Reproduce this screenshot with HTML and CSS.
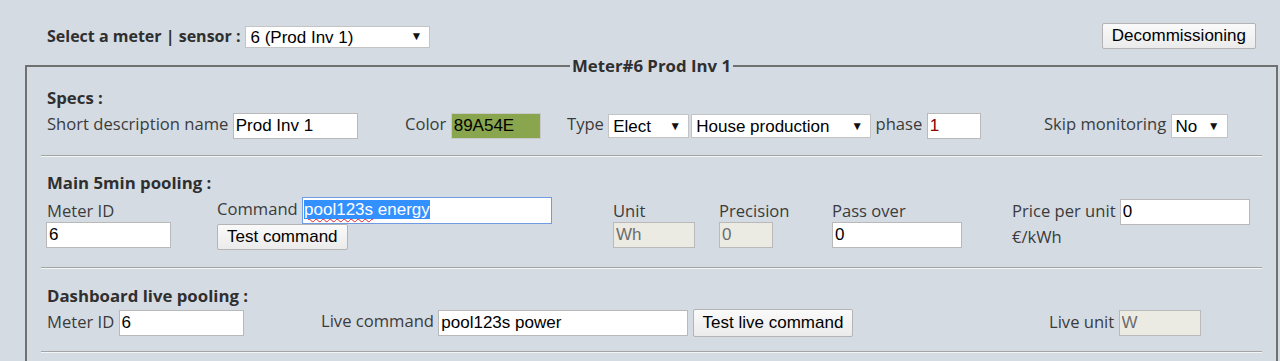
FILE: index.html
```html
<!DOCTYPE html>
<html lang="en">
<head>
    <meta charset="UTF-8">
    <title>Meter settings</title>
    <link rel="stylesheet" href="styles.css">
</head>
<body>
<div class="page">
    <div class="topbar">
        <div class="pick">
            <span class="heading">Select a meter | sensor :</span>
            <span class="select meter-select"><select><option>6 (Prod Inv 1)</option></select></span>
        </div>
        <button class="btn">Decommissioning</button>
    </div>

    <fieldset class="meter">
        <legend>Meter#6 Prod Inv 1</legend>

        <div class="block first">
            <div class="heading">Specs :</div>
            <div class="row specs">
                <div class="cell">Short description name <input class="w125" type="text" value="Prod Inv 1"></div>
                <div class="cell">Color <input class="w90 color-box" type="text" value="89A54E"></div>
                <div class="cell">Type <span class="select w81"><select><option>Elect</option></select></span><span class="select w180 next"><select><option>House production</option></select></span>
                    phase <input class="w54 red" type="text" value="1"></div>
                <div class="cell">Skip monitoring <span class="select w57"><select><option>No</option></select></span></div>
            </div>
        </div>
        <hr>

        <div class="block middle">
            <div class="heading">Main 5min pooling :</div>
            <div class="row main">
                <div class="cell">
                    <div>Meter ID</div>
                    <input class="w125 left" type="text" value="6">
                </div>
                <div class="cell">
                    Command <span class="fake-input focused w250"><span class="sel"><span class="typo">pool123s</span> energy</span></span><br>
                    <button class="btn">Test command</button>
                </div>
                <div class="cell">
                    <div>Unit</div>
                    <input class="w82" type="text" value="Wh" disabled>
                </div>
                <div class="cell">
                    <div>Precision</div>
                    <input class="w54" type="text" value="0" disabled>
                </div>
                <div class="cell">
                    <div>Pass over</div>
                    <input class="w130" type="text" value="0">
                </div>
                <div class="cell">
                    Price per unit <input class="w130" type="text" value="0"><br>
                    €/kWh
                </div>
            </div>
        </div>
        <hr>

        <div class="block">
            <div class="heading">Dashboard live pooling :</div>
            <div class="row live">
                <div class="cell">Meter ID <input class="w125" type="text" value="6"></div>
                <div class="cell">Live command <input class="w250" type="text" value="pool123s power">
                    <button class="btn tall">Test live command</button></div>
                <div class="cell">Live unit <input class="w82" type="text" value="W" disabled></div>
            </div>
        </div>
        <hr>
    </fieldset>
</div>
</body>
</html>
```

FILE: styles.css
```css
body {
    margin: 0;
    background-color: #d5dbe3;
    font-family: "Open Sans", sans-serif;
    font-size: 16.6px;
    color: #3b3b3b;
}
.page {
    margin: 0 2px 0 25px;
}
.heading {
    font-weight: bold;
    font-size: 16px;
    color: #2f2f2f;
}
.meter .heading {
    font-size: 16.8px;
}
.topbar {
    display: flex;
    justify-content: space-between;
    align-items: center;
    padding: 23px 22px 0 22px;
    height: 26px;
}
.pick {
    display: flex;
    align-items: center;
    gap: 5px;
}

/* form controls */
input, select, button {
    font-family: "Liberation Sans", Arial, sans-serif;
    font-size: 17px;
    color: #000;
    box-sizing: border-box;
    margin: 0;
    vertical-align: middle;
}
input {
    height: 26px;
    border: 1px solid #b9b9b9;
    background-color: white;
    padding: 0 2px;
}
input:disabled {
    background-color: #ebebe4;
    color: #6d6d6d;
}
input.red {
    color: #8b0000;
}
.color-box {
    background-color: #89a54e;
    border-color: #c9c9c9;
}
.fake-input {
    display: inline-block;
    box-sizing: border-box;
    height: 27px;
    border: 1px solid #b9b9b9;
    background-color: white;
    font-family: "Liberation Sans", Arial, sans-serif;
    font-size: 17px;
    color: #000;
    padding: 2px 1px;
    vertical-align: middle;
    line-height: 20px;
}
.fake-input.focused {
    border-color: #6e9be2;
}
.sel {
    background-color: #3390ff;
    color: white;
}
.typo {
    text-decoration: underline wavy #e02020;
    text-decoration-thickness: 1px;
    text-underline-offset: 3px;
}
.select {
    display: inline-block;
    position: relative;
    vertical-align: middle;
}
.select.next {
    margin-left: 2px;
}
.select select {
    appearance: none;
    width: 100%;
    height: 24px;
    border: 1px solid #c4c4c4;
    background-color: white;
    padding: 0 4px;
    border-radius: 0;
}
.select::after {
    content: "\25BC";
    position: absolute;
    right: 8px;
    top: 4px;
    font-size: 12px;
    color: #111;
    pointer-events: none;
}
.meter-select {
    width: 185px;
}
.meter-select select {
    height: 22px;
}
.meter-select::after {
    top: 3px;
}
.btn {
    height: 26px;
    padding: 0 9px;
    border: 1px solid #b4b4b4;
    border-radius: 2px;
    background: linear-gradient(#fafafa, #ebebeb);
}
.btn.tall {
    height: 28px;
}

.w54 { width: 54px; }
.w57 { width: 57px; }
.w81 { width: 81px; }
.w82 { width: 82px; }
.w90 { width: 90px; }
.w125 { width: 125px; }
.w130 { width: 130px; }
.w180 { width: 180px; }
.w250 { width: 250px; }

/* fieldset */
.meter {
    margin: 5px 0 0 0;
    padding: 0 14px 16px 14px;
    border: 2px solid #707070;
    min-width: 0;
}
.meter legend {
    font-weight: bold;
    font-size: 16.8px;
    color: #2f2f2f;
    margin: 0 auto;
    padding: 0 2px;
}
.block {
    padding: 15px 6px 0 6px;
}
.block.first {
    padding-top: 9px;
    padding-bottom: 2px;
}
.block.middle {
    padding-top: 14px;
    padding-bottom: 3px;
}
.row {
    display: grid;
    align-items: center;
    margin-top: 3px;
}
.specs {
    grid-template-columns: 358px 162px 477px auto;
}
.main {
    grid-template-columns: 170px 396px 106px 113px 180px auto;
}
.main .left {
    margin-left: -1px;
}
.live {
    grid-template-columns: 274px 728px auto;
    margin-top: 2px;
}
hr {
    margin: 14px 0 0 0;
    border: 0;
    border-top: 1px solid #a4a4a4;
    border-bottom: 1px solid #f2f4f6;
}
```
